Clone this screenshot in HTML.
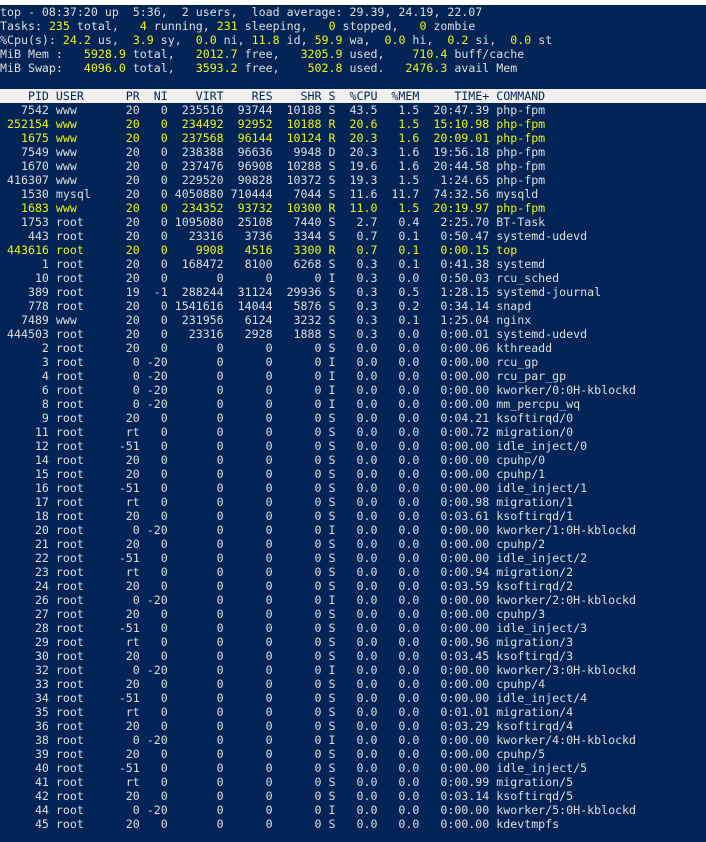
<!DOCTYPE html>
<html>
<head>
<meta charset="utf-8">
<style>
html,body{margin:0;padding:0;width:706px;height:842px;overflow:hidden;background:#012456;}
body{position:relative;}
.t{position:absolute;left:0;top:0;width:706px;height:5px;background:#fff;}
pre{position:absolute;left:0;top:5px;margin:0;width:706px;font-family:"DejaVu Sans Mono","Liberation Mono",monospace;font-size:11.628px;line-height:14px;color:#dedede;}
pre b{font-weight:normal;color:#f4f400;}
pre i{font-style:normal;display:block;height:14px;width:706px;background:#f0f0f0;color:#012456;}
</style>
</head>
<body>
<div class="t"></div>
<pre>top - 08:37:20 up  5:36,  2 users,  load average: 29.39, 24.19, 22.07
Tasks: <b>235</b> total,   <b>4</b> running, <b>231</b> sleeping,   <b>0</b> stopped,   <b>0</b> zombie
%Cpu(s): <b>24.2</b> us,  <b>3.9</b> sy,  <b>0.0</b> ni, <b>11.8</b> id, <b>59.9</b> wa,  <b>0.0</b> hi,  <b>0.2</b> si,  <b>0.0</b> st
MiB Mem :   <b>5928.9</b> total,   <b>2012.7</b> free,   <b>3205.9</b> used,    <b>710.4</b> buff/cache
MiB Swap:   <b>4096.0</b> total,   <b>3593.2</b> free,    <b>502.8</b> used.   <b>2476.3</b> avail Mem

<i>    PID USER      PR  NI    VIRT    RES    SHR S  %CPU  %MEM     TIME+ COMMAND</i>   7542 www       20   0  235516  93744  10188 S  43.5   1.5  20:47.39 php-fpm
<b> 252154 www       20   0  234492  92952  10188 R  20.6   1.5  15:10.98 php-fpm</b>
<b>   1675 www       20   0  237568  96144  10124 R  20.3   1.6  20:09.01 php-fpm</b>
   7549 www       20   0  238388  96636   9948 D  20.3   1.6  19:56.18 php-fpm
   1670 www       20   0  237476  96908  10288 S  19.6   1.6  20:44.58 php-fpm
 416307 www       20   0  229520  90828  10372 S  19.3   1.5   1:24.65 php-fpm
   1530 mysql     20   0 4050880 710444   7044 S  11.6  11.7  74:32.56 mysqld
<b>   1683 www       20   0  234352  93732  10300 R  11.0   1.5  20:19.97 php-fpm</b>
   1753 root      20   0 1095080  25108   7440 S   2.7   0.4   2:25.70 BT-Task
    443 root      20   0   23316   3736   3344 S   0.7   0.1   0:50.47 systemd-udevd
<b> 443616 root      20   0    9908   4516   3300 R   0.7   0.1   0:00.15 top</b>
      1 root      20   0  168472   8100   6268 S   0.3   0.1   0:41.38 systemd
     10 root      20   0       0      0      0 I   0.3   0.0   0:50.03 rcu_sched
    389 root      19  -1  288244  31124  29936 S   0.3   0.5   1:28.15 systemd-journal
    778 root      20   0 1541616  14044   5876 S   0.3   0.2   0:34.14 snapd
   7489 www       20   0  231956   6124   3232 S   0.3   0.1   1:25.04 nginx
 444503 root      20   0   23316   2928   1888 S   0.3   0.0   0:00.01 systemd-udevd
      2 root      20   0       0      0      0 S   0.0   0.0   0:00.06 kthreadd
      3 root       0 -20       0      0      0 I   0.0   0.0   0:00.00 rcu_gp
      4 root       0 -20       0      0      0 I   0.0   0.0   0:00.00 rcu_par_gp
      6 root       0 -20       0      0      0 I   0.0   0.0   0:00.00 kworker/0:0H-kblockd
      8 root       0 -20       0      0      0 I   0.0   0.0   0:00.00 mm_percpu_wq
      9 root      20   0       0      0      0 S   0.0   0.0   0:04.21 ksoftirqd/0
     11 root      rt   0       0      0      0 S   0.0   0.0   0:00.72 migration/0
     12 root     -51   0       0      0      0 S   0.0   0.0   0:00.00 idle_inject/0
     14 root      20   0       0      0      0 S   0.0   0.0   0:00.00 cpuhp/0
     15 root      20   0       0      0      0 S   0.0   0.0   0:00.00 cpuhp/1
     16 root     -51   0       0      0      0 S   0.0   0.0   0:00.00 idle_inject/1
     17 root      rt   0       0      0      0 S   0.0   0.0   0:00.98 migration/1
     18 root      20   0       0      0      0 S   0.0   0.0   0:03.61 ksoftirqd/1
     20 root       0 -20       0      0      0 I   0.0   0.0   0:00.00 kworker/1:0H-kblockd
     21 root      20   0       0      0      0 S   0.0   0.0   0:00.00 cpuhp/2
     22 root     -51   0       0      0      0 S   0.0   0.0   0:00.00 idle_inject/2
     23 root      rt   0       0      0      0 S   0.0   0.0   0:00.94 migration/2
     24 root      20   0       0      0      0 S   0.0   0.0   0:03.59 ksoftirqd/2
     26 root       0 -20       0      0      0 I   0.0   0.0   0:00.00 kworker/2:0H-kblockd
     27 root      20   0       0      0      0 S   0.0   0.0   0:00.00 cpuhp/3
     28 root     -51   0       0      0      0 S   0.0   0.0   0:00.00 idle_inject/3
     29 root      rt   0       0      0      0 S   0.0   0.0   0:00.96 migration/3
     30 root      20   0       0      0      0 S   0.0   0.0   0:03.45 ksoftirqd/3
     32 root       0 -20       0      0      0 I   0.0   0.0   0:00.00 kworker/3:0H-kblockd
     33 root      20   0       0      0      0 S   0.0   0.0   0:00.00 cpuhp/4
     34 root     -51   0       0      0      0 S   0.0   0.0   0:00.00 idle_inject/4
     35 root      rt   0       0      0      0 S   0.0   0.0   0:01.01 migration/4
     36 root      20   0       0      0      0 S   0.0   0.0   0:03.29 ksoftirqd/4
     38 root       0 -20       0      0      0 I   0.0   0.0   0:00.00 kworker/4:0H-kblockd
     39 root      20   0       0      0      0 S   0.0   0.0   0:00.00 cpuhp/5
     40 root     -51   0       0      0      0 S   0.0   0.0   0:00.00 idle_inject/5
     41 root      rt   0       0      0      0 S   0.0   0.0   0:00.99 migration/5
     42 root      20   0       0      0      0 S   0.0   0.0   0:03.14 ksoftirqd/5
     44 root       0 -20       0      0      0 I   0.0   0.0   0:00.00 kworker/5:0H-kblockd
     45 root      20   0       0      0      0 S   0.0   0.0   0:00.00 kdevtmpfs
</pre>
</body>
</html>
